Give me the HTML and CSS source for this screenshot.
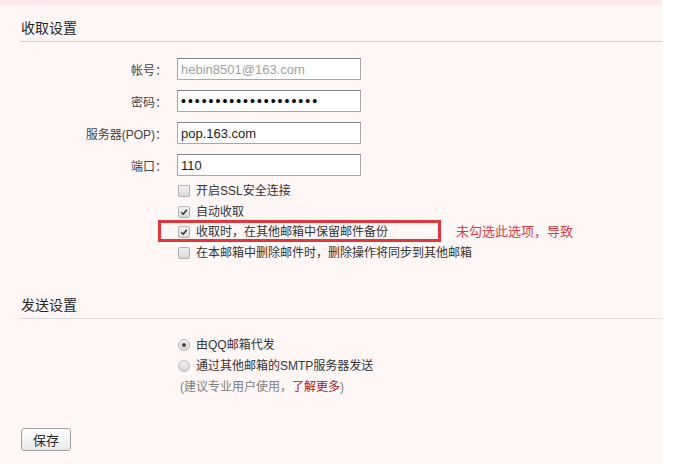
FILE: index.html
```html
<!DOCTYPE html>
<html lang="zh-CN">
<head>
  <meta charset="UTF-8" />
  <title>收取设置</title>
  <link rel="stylesheet" href="styles.css">
</head>

<body>
  <div class="page">

    <div class="section">
      <h2 class="section-title">收取设置</h2>

      <div class="fields">
        <div class="field">
          <label class="field-label">帐号<span class="colon">：</span></label>
          <input class="text-input muted" type="text" value="hebin8501@163.com" readonly>
        </div>
        <div class="field">
          <label class="field-label">密码<span class="colon">：</span></label>
          <input class="text-input" type="password" value="abcdefghijklmnopqrst">
        </div>
        <div class="field">
          <label class="field-label">服务器(POP)<span class="colon">：</span></label>
          <input class="text-input" type="text" value="pop.163.com">
        </div>
        <div class="field">
          <label class="field-label">端口<span class="colon">：</span></label>
          <input class="text-input" type="text" value="110">
        </div>
      </div>

      <div class="options">
        <label class="option"><span class="checkbox"></span>开启SSL安全连接</label>
        <label class="option"><span class="checkbox checked"><svg viewBox="0 0 12 12"><path d="M2.8 6.2 L5 8.6 L9.4 3.2" /></svg></span>自动收取</label>
        <label class="option highlighted">
          <span class="checkbox checked"><svg viewBox="0 0 12 12"><path d="M2.8 6.2 L5 8.6 L9.4 3.2" /></svg></span>收取时，在其他邮箱中保留邮件备份
          <span class="mark-box"></span>
          <span class="mark-note">未勾选此选项，导致</span>
        </label>
        <label class="option"><span class="checkbox"></span>在本邮箱中删除邮件时，删除操作将同步到其他邮箱</label>
      </div>
    </div>

    <div class="section">
      <h2 class="section-title light">发送设置</h2>

      <div class="options radios">
        <label class="option"><span class="radio checked"></span>由QQ邮箱代发</label>
        <label class="option"><span class="radio"></span>通过其他邮箱的SMTP服务器发送</label>
        <div class="option hint">(建议专业用户使用，<a href="#" class="hint-link">了解更多</a>)</div>
      </div>
    </div>

    <div class="actions">
      <button class="btn">保存</button>
    </div>

  </div>
</body>
</html>
```

FILE: styles.css
```css
* {
  box-sizing: border-box;
  margin: 0;
  padding: 0;
}

body {
  background-color: rgb(255, 255, 255);
  font-family: "Liberation Sans", "Noto Sans CJK SC", sans-serif;
  font-size: 12px;
  color: rgb(51, 51, 51);
}

.page {
  width: 662px;
  height: 464px;
  background-color: rgb(255, 246, 246);
  border-top: 5px solid rgb(251, 233, 236);
  padding-left: 20px;
}

.section-title {
  font-size: 14px;
  font-weight: normal;
  line-height: 18px;
  padding-top: 14px;
  padding-bottom: 4px;
  padding-left: 1px;
  border-bottom: 1px solid rgb(205, 211, 222);
  color: rgb(40, 40, 40);
}
.section-title.light {
  border-bottom-color: rgb(218, 218, 218);
}

.section + .section {
  margin-top: 19px;
}

.fields {
  padding-top: 16px;
  display: flex;
  flex-direction: column;
  gap: 10px;
}

.field {
  display: flex;
  align-items: center;
  height: 22px;
}

.field-label {
  width: 157px;
  text-align: right;
  padding-right: 13px;
  color: rgb(68, 68, 68);
}
.colon {
  display: inline-block;
  width: 9px;
  text-align: right;
}

.text-input {
  width: 184px;
  height: 22px;
  border: 1px solid rgb(168, 168, 168);
  border-top-color: rgb(130, 130, 130);
  background-color: rgb(255, 255, 255);
  padding-left: 3px;
  font-family: "Liberation Sans", sans-serif;
  font-size: 13px;
  color: rgb(30, 30, 30);
  outline: none;
}
.text-input.muted {
  color: rgb(160, 160, 160);
}
.text-input[type="password"] {
  font-size: 14px;
  letter-spacing: 2px;
  color: rgb(0, 0, 0);
}

.options {
  padding-left: 158px;
  padding-top: 5px;
}
.options.radios {
  padding-top: 15px;
}

.option {
  position: relative;
  display: flex;
  align-items: center;
  height: 20.5px;
  line-height: 20px;
  color: rgb(51, 51, 51);
}
.radios .option {
  height: 21px;
}

.checkbox {
  width: 12px;
  height: 12px;
  margin-right: 6px;
  border: 1px solid rgb(178, 178, 178);
  border-radius: 2px;
  background: linear-gradient(rgb(240, 240, 240), rgb(218, 218, 218));
  display: flex;
}
.checkbox svg {
  width: 10px;
  height: 10px;
}
.checkbox path {
  fill: none;
  stroke: rgb(50, 50, 50);
  stroke-width: 1.8;
}

.radio {
  width: 12px;
  height: 12px;
  margin-right: 6px;
  border: 1px solid rgb(185, 185, 185);
  border-radius: 50%;
  background: linear-gradient(rgb(242, 242, 242), rgb(215, 215, 215));
  display: flex;
  align-items: center;
  justify-content: center;
}
.radio.checked::after {
  content: "";
  width: 4px;
  height: 4px;
  border-radius: 50%;
  background-color: rgb(70, 70, 70);
}

.mark-box {
  position: absolute;
  left: -20px;
  top: -2px;
  width: 283px;
  height: 22px;
  border: 3px solid rgb(226, 54, 58);
}

.mark-note {
  position: absolute;
  left: 278px;
  top: 0;
  font-size: 13px;
  white-space: nowrap;
  color: rgb(214, 64, 72);
}

.hint {
  padding-left: 2px;
  color: rgb(128, 128, 128);
}
.hint-link {
  color: rgb(168, 22, 28);
  text-decoration: none;
}

.actions {
  margin-top: 31px;
  padding-left: 1px;
}

.btn {
  width: 50px;
  height: 23px;
  border: 1px solid rgb(160, 160, 160);
  border-radius: 3px;
  background: linear-gradient(rgb(255, 255, 255), rgb(232, 232, 232));
  font-family: "Noto Sans CJK SC", sans-serif;
  font-size: 13px;
  color: rgb(40, 40, 40);
}
```
